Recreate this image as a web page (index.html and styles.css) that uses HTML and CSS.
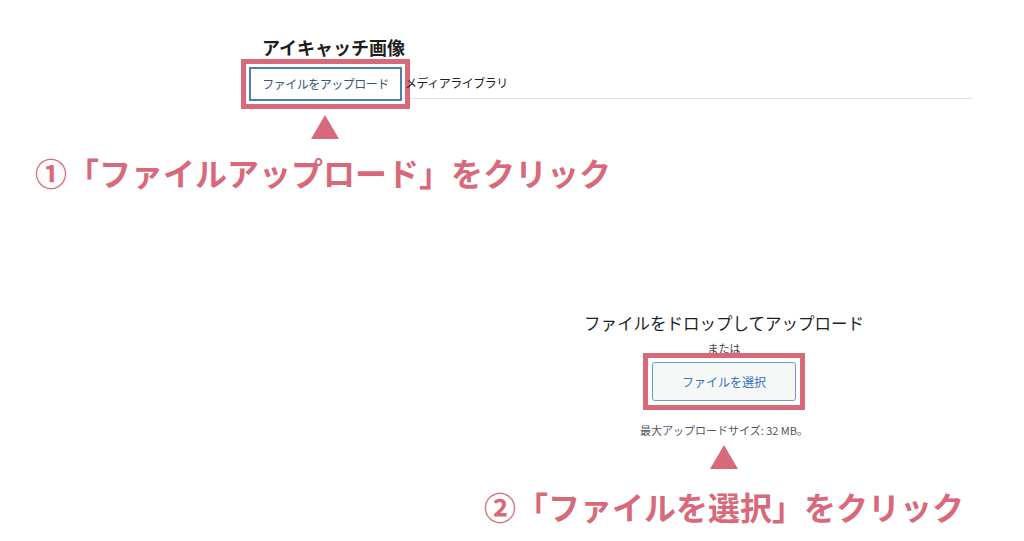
FILE: index.html
```html
<!DOCTYPE html>
<html lang="ja">
<head>
    <meta charset="UTF-8">
    <meta name="viewport" content="width=device-width, initial-scale=1.0">
    <title>アイキャッチ画像のアップロード手順</title>
    <link rel="stylesheet" href="styles.css">
</head>
<body>
    <div class="panel">
        <h2 class="panel-title">アイキャッチ画像</h2>
        <div class="tabs">
            <button class="tab tab-active mark">ファイルをアップロード</button>
            <span class="tab">メディアライブラリ</span>
        </div>
    </div>

    <div class="arrow arrow-first"></div>
    <p class="step step-first">①「ファイルアップロード」をクリック</p>

    <div class="drop">
        <p class="drop-title">ファイルをドロップしてアップロード</p>
        <p class="drop-or">または</p>
        <div class="mark-box">
            <button class="select-btn">ファイルを選択</button>
        </div>
        <p class="drop-limit">最大アップロードサイズ: 32 MB。</p>
        <div class="arrow"></div>
    </div>

    <p class="step step-second">②「ファイルを選択」をクリック</p>
</body>
</html>
```

FILE: styles.css
```css
body {
    margin: 0;
    background: #fff;
    font-family: "Noto Sans CJK JP", "Noto Sans", sans-serif;
    color: #1e1e1e;
}
p {
    margin: 0;
}
.panel {
    padding: 36px 0 0 249px;
}
.panel-title {
    margin: 0 0 0 13px;
    font-size: 18px;
    line-height: 22px;
    font-weight: 700;
    color: #1e1e1e;
}
.tabs {
    display: flex;
    align-items: flex-start;
    width: 723px;
    height: 31px;
    margin-top: 9px;
    border-bottom: 1px solid #e2e2e2;
}
.tab {
    font-family: inherit;
    font-size: 12px;
    letter-spacing: -0.5px;
    line-height: 31px;
    color: #1e1e1e;
}
.tab-active {
    box-sizing: border-box;
    width: 153px;
    height: 34px;
    margin: 0 3px 0 0;
    padding: 0;
    background: #fff;
    border: 2px solid #4f7cb3;
    color: #3b5576;
    line-height: 30px;
}
/* 注釈の枠 */
.mark {
    outline: 5px solid #d8697a;
    outline-offset: 3px;
}
.mark-box {
    margin-top: -3px;
    padding: 4px;
    border: 5px solid #d8697a;
}
.arrow {
    width: 0;
    height: 0;
    border-left: 14px solid transparent;
    border-right: 14px solid transparent;
    border-bottom: 24px solid #d8697a;
}
.arrow-first {
    margin: 16px 0 0 311px;
}
.step {
    font-size: 32px;
    line-height: 40px;
    font-weight: 700;
    color: #d8697a;
    white-space: nowrap;
}
.step-first {
    margin-top: 13px;
    padding-left: 35px;
}
.drop {
    display: flex;
    flex-direction: column;
    align-items: center;
    width: 320px;
    margin: 119px 0 0 564px;
}
.drop-title {
    font-size: 16.5px;
    line-height: 24px;
    color: #1e1e1e;
}
.drop-or {
    margin-top: 5px;
    font-size: 11px;
    line-height: 16px;
    color: #3c434a;
}
.select-btn {
    display: block;
    box-sizing: border-box;
    width: 144px;
    height: 39px;
    margin: 0;
    background: #f6f7f7;
    border: 1px solid #6c9bd2;
    border-radius: 3px;
    font-family: inherit;
    font-size: 12px;
    color: #3571bd;
}
.drop-limit {
    margin-top: 12px;
    font-size: 11px;
    line-height: 16px;
    color: #50575e;
}
.drop .arrow {
    margin-top: 7px;
}
.step-second {
    margin-top: 17px;
    padding-left: 484px;
}
```
